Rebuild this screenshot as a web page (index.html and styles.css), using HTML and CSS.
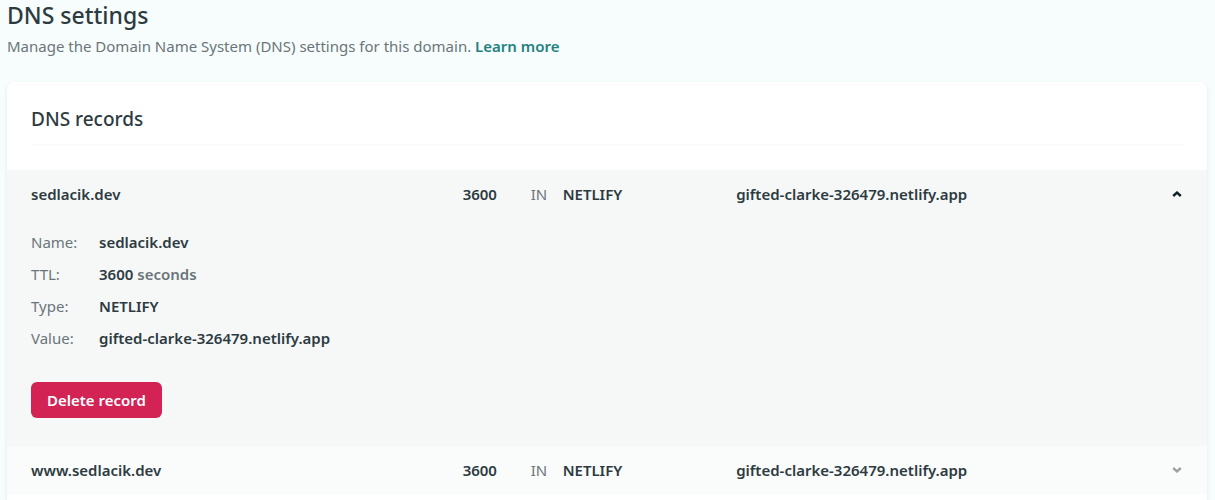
FILE: index.html
```html
<!DOCTYPE html>
<html lang="en">
<head>
<meta charset="utf-8">
<meta name="viewport" content="width=device-width, initial-scale=1">
<title>DNS settings</title>
<link rel="stylesheet" href="styles.css">
</head>
<body>
<header class="page-header">
  <h1 class="page-title">DNS settings</h1>
  <p class="page-intro">Manage the Domain Name System (DNS) settings for this domain. <a class="link" href="#learn-more">Learn more</a></p>
</header>
<main class="card">
  <h2 class="card-title">DNS records</h2>
  <ul class="records">
    <li class="record record-open">
      <button class="record-summary" type="button" aria-expanded="true" aria-controls="record-1">
        <span>sedlacik.dev</span>
        <span>3600</span>
        <span class="muted">IN</span>
        <span>NETLIFY</span>
        <span>gifted-clarke-326479.netlify.app</span>
        <svg class="chevron" viewBox="0 0 10 6" aria-hidden="true"><path d="M1.2 5 5 1.6 8.8 5"/></svg>
      </button>
      <div class="record-details" id="record-1">
        <dl class="fields">
          <dt>Name:</dt><dd>sedlacik.dev</dd>
          <dt>TTL:</dt><dd>3600 <span class="unit">seconds</span></dd>
          <dt>Type:</dt><dd>NETLIFY</dd>
          <dt>Value:</dt><dd>gifted-clarke-326479.netlify.app</dd>
        </dl>
        <button class="delete-button" type="button">Delete record</button>
      </div>
    </li>
    <li class="record">
      <button class="record-summary" type="button" aria-expanded="false">
        <span>www.sedlacik.dev</span>
        <span>3600</span>
        <span class="muted">IN</span>
        <span>NETLIFY</span>
        <span>gifted-clarke-326479.netlify.app</span>
        <svg class="chevron" viewBox="0 0 10 6" aria-hidden="true"><path d="M1.2 1 5 4.4 8.8 1"/></svg>
      </button>
    </li>
  </ul>
</main>
</body>
</html>
```

FILE: styles.css
```css
* {
  box-sizing: border-box;
}

body {
  display: flex;
  flex-direction: column;
  min-height: 100vh;
  margin: 0;
  padding: 0 8px 0 7px;
  background: #f7fdfd;
  color: #2d3b41;
  font-family: "Segoe UI", "Noto Sans", "Open Sans", sans-serif;
  font-size: 15px;
  line-height: 24px;
}

.page-header {
  padding-bottom: 24px;
}

.page-title {
  margin: 0 0 4px;
  font-size: 23px;
  font-weight: 500;
  line-height: 30px;
}

.page-intro {
  margin: 0;
  color: #6b7579;
}

.link {
  color: #22827e;
  font-weight: 600;
  text-decoration: none;
}

.card {
  flex: 1;
  border-radius: 8px 8px 0 0;
  background: #fff;
  box-shadow: 0 2px 4px rgba(14, 60, 60, 0.1);
}

.card-title {
  margin: 0 24px 24px;
  padding: 24px 0 12px;
  border-bottom: 2px solid #f9fafa;
  font-size: 19px;
  font-weight: 500;
  line-height: 26px;
}

.records {
  margin: 0;
  padding: 0;
  list-style: none;
}

.record {
  background: #fafbfb;
}

.record-open {
  background: #f6f8f8;
}

.record-summary {
  display: grid;
  grid-template-columns: 102fr 68px 32px 41fr 103fr 11px;
  align-items: center;
  width: 100%;
  padding: 12px 24px;
  border: 0;
  background: none;
  color: inherit;
  font: inherit;
  font-weight: 600;
  text-align: left;
  cursor: pointer;
}

.muted {
  color: #6b7579;
  font-weight: 400;
}

.chevron {
  width: 10px;
  height: 6px;
  fill: none;
  stroke: #9ba2a4;
  stroke-width: 2.4;
}

.record-open .chevron {
  stroke: #0e1e25;
}

.record-details {
  padding: 8px 24px 28px;
}

.fields {
  display: grid;
  grid-template-columns: 68px 1fr;
  margin: 0 0 28px;
  line-height: 32px;
}

.fields dt {
  color: #6b7579;
}

.fields dd {
  margin: 0;
  font-weight: 600;
}

.unit {
  color: #6b7579;
}

.delete-button {
  display: block;
  padding: 6px 16px;
  border: 0;
  border-radius: 6px;
  background: #d32254;
  color: #fff;
  font: inherit;
  font-weight: 600;
  cursor: pointer;
}
```
